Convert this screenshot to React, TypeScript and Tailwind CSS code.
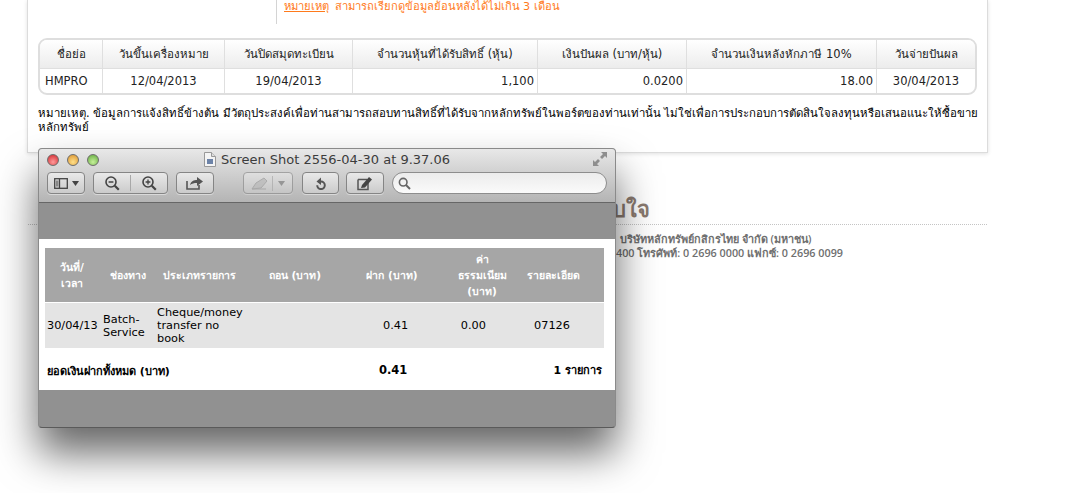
import React from "react";

const head = ["ชื่อย่อ", "วันขึ้นเครื่องหมาย", "วันปิดสมุดทะเบียน", "จำนวนหุ้นที่ได้รับสิทธิ์ (หุ้น)", "เงินปันผล (บาท/หุ้น)", "จำนวนเงินหลังหักภาษี 10%", "วันจ่ายปันผล"];
const widths = ["w-[63px]", "w-[122px]", "w-[128px]", "w-[185px]", "w-[149px]", "w-[190px]", "w-[98px]"];

function Btn({ className, children }: { className: string; children: React.ReactNode }) {
  return (
    <div className={`h-[22px] flex items-center justify-center rounded-[4px] border border-[#858585] bg-gradient-to-b from-[#e9e9e9] to-[#cbcbcb] shadow-[0_1px_0_rgba(255,255,255,0.45)] ${className}`}>
      {children}
    </div>
  );
}

function Light({ className }: { className: string }) {
  return <div className={`w-[12px] h-[12px] rounded-full border border-[#6d6d6d] ${className}`} />;
}

function Mag({ plus }: { plus?: boolean }) {
  return (
    <svg width="16" height="16" viewBox="0 0 16 16" fill="none" stroke="#444" strokeWidth="1.6">
      <circle cx="7" cy="7" r="5" />
      <path d="M4.6 7h4.8" strokeWidth="1.3" />
      {plus && <path d="M7 4.6v4.8" strokeWidth="1.3" />}
      <path d="M10.8 10.8l4 4" strokeWidth="2.2" />
    </svg>
  );
}

export default function App() {
  return (
    <div className="relative w-[1088px] h-[493px] overflow-hidden bg-white font-['Tahoma','DejaVu_Sans',sans-serif] text-black">
      <div className="ml-[27px] w-[961px] h-[153px] bg-white border-x border-b border-[#dcdcdc] shadow-[0_1px_4px_rgba(0,0,0,0.12)] flex flex-col">
        <div className="ml-[248px] h-[24px] border-l border-[#d4d4d4] pl-[7px] text-[11.2px] leading-[14px] text-[#ff7a1c]">
          <span className="underline">หมายเหตุ</span> <span className="ml-[2px]">สามารถเรียกดูข้อมูลย้อนหลังได้ไม่เกิน 3 เดือน</span>
        </div>
        <div className="mt-[14px] ml-[10px] w-[939px] h-[57px] rounded-[9px] border-2 border-[#dedede] overflow-hidden flex flex-col text-[11.5px] text-[#222]">
          <div className="flex h-[29px] border-b border-[#dfdfdf] bg-gradient-to-b from-white to-[#ececec]">
            {head.map((h, i) => (
              <div key={h} className={`${widths[i]} shrink-0 flex items-center justify-center pt-[2px] border-r border-[#dfdfdf] last:border-r-0`}>{h}</div>
            ))}
          </div>
          <div className="flex flex-1 items-center">
            <div className={`${widths[0]} h-full flex items-center pl-[5px] pt-[2px] border-r border-[#dfdfdf]`}>HMPRO</div>
            <div className={`${widths[1]} h-full flex items-center justify-center pt-[2px] border-r border-[#dfdfdf]`}>12/04/2013</div>
            <div className={`${widths[2]} h-full flex items-center justify-center pt-[2px] border-r border-[#dfdfdf]`}>19/04/2013</div>
            <div className={`${widths[3]} h-full flex items-center justify-end pr-[3px] pt-[2px] border-r border-[#dfdfdf]`}>1,100</div>
            <div className={`${widths[4]} h-full flex items-center justify-end pr-[3px] pt-[2px] border-r border-[#dfdfdf]`}>0.0200</div>
            <div className={`${widths[5]} h-full flex items-center justify-end pr-[3px] pt-[2px] border-r border-[#dfdfdf]`}>18.00</div>
            <div className={`${widths[6]} h-full flex items-center justify-center pt-[2px]`}>30/04/2013</div>
          </div>
        </div>
        <p className="mt-[11px] ml-[10px] w-[945px] text-[11.4px] leading-[14px]">
          หมายเหตุ. ข้อมูลการแจ้งสิทธิ์ข้างต้น มีวัตถุประสงค์เพื่อท่านสามารถสอบทานสิทธิ์ที่ได้รับจากหลักทรัพย์ในพอร์ตของท่านเท่านั้น ไม่ใช่เพื่อการประกอบการตัดสินใจลงทุนหรือเสนอแนะให้ซื้อขาย<br />หลักทรัพย์
        </p>
      </div>

      <div className="mt-[43px] ml-[28px] w-[959px]">
        <div className="w-[622px] h-[28px] text-right text-[22px] leading-[28px] font-bold text-[#8a7a70]">ขอบใจ</div>
        <div className="border-b border-dotted border-[#c4c4c4]" />
        <div className="mt-[7px] pl-[592px] font-['Open_Sans','DejaVu_Sans',sans-serif] font-semibold text-[10.8px] leading-[14px] text-[#6f6f6f]">
          <div>บริษัทหลักทรัพย์กสิกรไทย จำกัด (มหาชน)</div>
          <div className="-ml-[4px]">400 โทรศัพท์: 0 2696 0000 แฟกซ์: 0 2696 0099</div>
        </div>
      </div>

      <div className="absolute left-[38px] top-[148px] w-[578px] h-[280px] rounded-[4px] border border-[#8a8a8a] border-b-[#5a5a5a] bg-[#919191] shadow-[0_25px_42px_rgba(0,0,0,0.6)] flex flex-col overflow-hidden">
        <div className="h-[54px] shrink-0 bg-gradient-to-b from-[#e8e8e8] to-[#b4b4b4] border-b border-[#666] flex flex-col px-[8px]">
          <div className="relative h-[21px] flex items-center gap-[8px]">
            <Light className="bg-[radial-gradient(circle_at_50%_70%,#ff9a9a,#d0242a)]" />
            <Light className="bg-[radial-gradient(circle_at_50%_70%,#ffe08a,#d9902a)]" />
            <Light className="bg-[radial-gradient(circle_at_50%_70%,#c6f09a,#5fa83a)]" />
            <div className="flex-1 flex items-center justify-center gap-[5px] text-[13px] text-[#3c3c3c] pr-[60px] font-['DejaVu_Sans',sans-serif]">
              <svg width="12" height="15" viewBox="0 0 12 15">
                <path d="M.5.5h7l4 4v10H.5z" fill="#f4f4f4" stroke="#999" />
                <path d="M7.5.5v4h4" fill="#ddd" stroke="#999" />
                <rect x="3" y="7" width="6" height="5" fill="#6d83a8" />
              </svg>
              <span>Screen Shot 2556-04-30 at 9.37.06</span>
            </div>
            <svg className="absolute right-[0px] top-[3px]" width="14" height="14" viewBox="0 0 14 14" fill="#8e8e8e">
              <path d="M14 0v6l-2-2-3 3-2-2 3-3-2-2zM0 14V8l2 2 3-3 2 2-3 3 2 2z" />
            </svg>
          </div>
          <div className="flex items-center mt-[2px]">
            <Btn className="w-[38px] gap-[4px]">
              <svg width="14" height="11" viewBox="0 0 14 11" fill="none" stroke="#444" strokeWidth="1.3">
                <rect x=".7" y=".7" width="12.6" height="9.6" />
                <path d="M5.5 1v9" />
                <rect x="2" y="2.500" width="2.500" height="6" fill="#888" stroke="none" />
              </svg>
              <svg width="7" height="5" viewBox="0 0 7 5" fill="#444"><path d="M0 0h7L3.500 5z" /></svg>
            </Btn>
            <Btn className="ml-[8px] w-[75px]">
              <div className="w-[37px] flex justify-center border-r border-[#a8a8a8]"><Mag /></div>
              <div className="w-[37px] flex justify-center"><Mag plus /></div>
            </Btn>
            <Btn className="ml-[8px] w-[38px]">
              <svg width="18" height="14" viewBox="0 0 18 14" fill="none">
                <path d="M1 5v8h12V9" stroke="#555" strokeWidth="1.6" />
                <path d="M4 9c1-4 4-5 7-5V1l6 4.500-6 4.500V7C8 7 6 7.500 4 9z" fill="#555" />
              </svg>
            </Btn>
            <Btn className="ml-[29px] w-[50px] opacity-60">
              <svg width="17" height="13" viewBox="0 0 17 13" className="mr-[4px]"><path d="M1 12l4-6 8-5 3 3-6 7z" fill="#bbb" stroke="#999" /><path d="M1 12h14" stroke="#999" /></svg>
              <div className="w-px h-[15px] bg-[#aaa] mr-[5px]" />
              <svg width="7" height="5" viewBox="0 0 7 5" fill="#777"><path d="M0 0h7L3.500 5z" /></svg>
            </Btn>
            <Btn className="ml-[9px] w-[37px]">
              <svg width="12" height="14" viewBox="0 0 12 14" fill="none">
                <path d="M3.500 5.500h2.500a3.800 3.800 0 1 1-3.800 3.800" stroke="#555" strokeWidth="2" />
                <path d="M6 1.500L1.500 5.500 6 9z" fill="#555" />
              </svg>
            </Btn>
            <Btn className="ml-[7px] w-[38px]">
              <svg width="17" height="15" viewBox="0 0 17 15" fill="none">
                <path d="M1 3.500h9M1 3.500v10h10V7" stroke="#555" strokeWidth="1.500" />
                <path d="M4 12l1-3 7-8 3 2.500-7 8z" fill="#444" />
              </svg>
            </Btn>
            <div className="ml-[8px] w-[215px] h-[22px] rounded-full border border-[#8d8d8d] bg-gradient-to-b from-[#ececec] to-[#fafafa] flex items-center pl-[5px]">
              <svg width="13" height="13" viewBox="0 0 13 13" fill="none" stroke="#666" strokeWidth="1.600">
                <circle cx="5.200" cy="5.200" r="3.800" />
                <path d="M8 8l4 4" strokeWidth="2" />
              </svg>
            </div>
          </div>
        </div>

        <div className="h-[36px] shrink-0" />

        <div className="h-[151px] shrink-0 bg-white pt-[9px] pl-[6px] font-['DejaVu_Sans',sans-serif] text-[11.3px] leading-[13px]">
          <div className="w-[559px] h-[54px] bg-[#a6a6a6] flex items-center text-white font-bold text-center text-[10.5px] leading-[16px]">
            <div className="w-[54px]">วันที่/<br />เวลา</div>
            <div className="w-[58px]">ช่องทาง</div>
            <div className="w-[84px]">ประเภทรายการ</div>
            <div className="w-[100px] pl-[8px]">ถอน (บาท)</div>
            <div className="w-[90px] pl-[12px]">ฝาก (บาท)</div>
            <div className="w-[82px] pl-[20px]">ค่า<br />ธรรมเนียม<br />(บาท)</div>
            <div className="w-[91px] -ml-[5px]">รายละเอียด</div>
          </div>
          <div className="mt-px w-[559px] h-[45px] bg-[#e4e4e4] flex items-center">
            <div className="w-[58px] pl-[2px]">30/04/13</div>
            <div className="w-[54px]">Batch-<br />Service</div>
            <div className="w-[110px]">Cheque/money<br />transfer no<br />book</div>
            <div className="w-[116px]" />
            <div className="w-[24px] text-right">0.41</div>
            <div className="w-[79px] text-right">0.00</div>
            <div className="w-[84px] text-right">07126</div>
          </div>
          <div className="w-[559px] h-[42px] flex items-center font-bold pt-[4px] text-[11px]">
            <div className="w-[334px] pl-[2px]">ยอดเงินฝากทั้งหมด (บาท)</div>
            <div className="w-[28px] text-[11.5px] text-right -mt-[2px]">0.41</div>
            <div className="flex-1 text-right pr-[2px] -mt-[2px]">1 รายการ</div>
          </div>
        </div>
      </div>
    </div>
  );
}
